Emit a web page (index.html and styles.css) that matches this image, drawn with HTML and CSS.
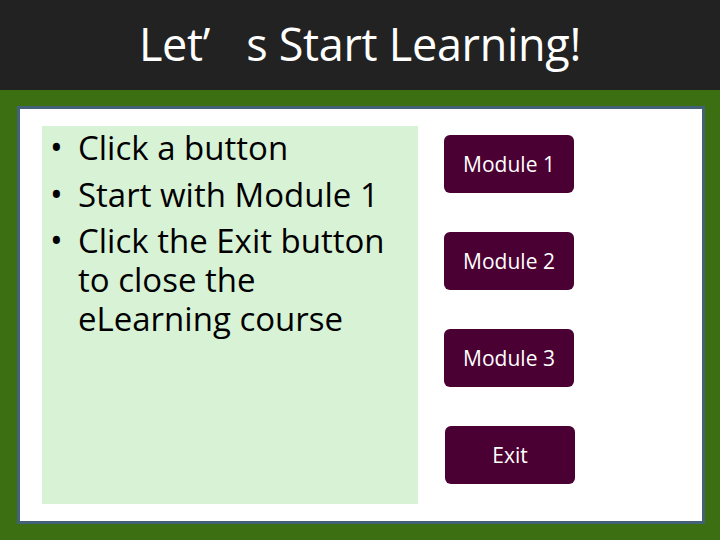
FILE: index.html
```
<!DOCTYPE html>
<html>
<head>
<meta charset="utf-8">
<link rel="stylesheet" href="styles.css">
</head>
<body>
<header class="header">
  <h1 class="title">Let’<span class="gap"></span>s Start Learning!</h1>
</header>
<main class="stage">
  <section class="panel">
    <ul class="tips">
      <li class="tip"><span class="dot">•</span><span class="txt">Click a button</span></li>
      <li class="tip"><span class="dot">•</span><span class="txt">Start with Module 1</span></li>
      <li class="tip"><span class="dot">•</span><span class="txt">Click the Exit button to close the eLearning course</span></li>
    </ul>
    <nav class="buttons">
      <button class="btn">Module 1</button>
      <button class="btn">Module 2</button>
      <button class="btn">Module 3</button>
      <button class="btn btn-exit">Exit</button>
    </nav>
  </section>
</main>
</body>
</html>
```
FILE: styles.css
```
html, body {
  margin: 0;
  padding: 0;
}
body {
  width: 720px;
  height: 540px;
  overflow: hidden;
  font-family: "Open Sans", "Noto Sans", sans-serif;
  background: #3c6e12;
}
.header {
  height: 90px;
  background: #222222;
  display: flex;
  align-items: center;
  justify-content: center;
}
.title {
  margin: 0 0 4px 0;
  color: #ffffff;
  font-weight: 400;
  font-size: 45px;
  line-height: 1;
  letter-spacing: -0.3px;
}
.gap {
  display: inline-block;
  width: 36px;
}
.stage {
  padding: 16px 15px 16px 17px;
}
.panel {
  border: 3px solid #44617a;
  background: #ffffff;
  display: flex;
  align-items: flex-start;
  padding: 17px 0 0 22px;
  box-sizing: border-box;
  height: 418px;
}
.tips {
  list-style: none;
  margin: 0;
  padding: 2px 18px 0 8px;
  width: 376px;
  height: 378px;
  box-sizing: border-box;
  background: #d8f2d6;
  color: #000000;
  font-size: 33px;
  line-height: 39px;
}
.tip {
  display: flex;
  margin-bottom: 7.5px;
}
.dot {
  width: 28px;
  flex: none;
  font-size: 34px;
}
.txt {
  flex: 1;
}
.buttons {
  display: flex;
  flex-direction: column;
  gap: 39px;
  margin: 9px 0 0 26px;
}
.btn {
  width: 130px;
  height: 58px;
  border: none;
  border-radius: 6px;
  background: #4a0033;
  color: #ffffff;
  font-family: "Open Sans", "Noto Sans", sans-serif;
  font-size: 21px;
  padding: 0;
}
.btn-exit {
  margin-left: 1px;
}
```
